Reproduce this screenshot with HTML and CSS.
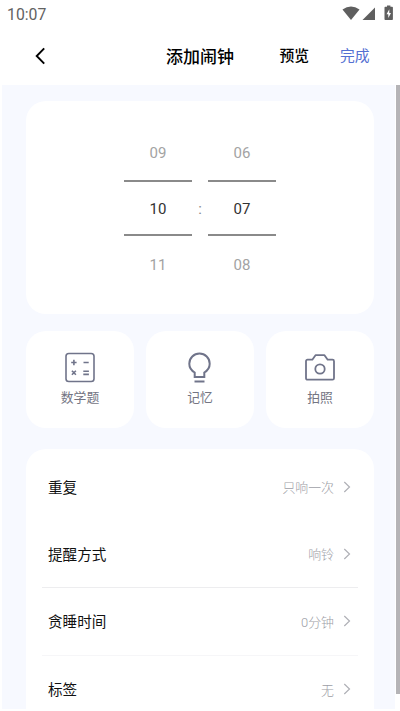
FILE: index.html
```html
<!DOCTYPE html>
<html lang="zh-CN">
<head>
<meta charset="utf-8">
<title>添加闹钟</title>
<link rel="stylesheet" href="styles.css">
</head>
<body>
<div class="screen">
  <div class="status">
    <span class="clock">10:07</span>
    <svg class="status-icons" width="52" height="18" viewBox="0 0 52 18">
      <path d="M0.5 4.6Q9 -1.6 17.5 4.6L9 15Z" fill="#5f5f5f"/>
      <path d="M33 2.5V15H20.5Z" fill="#5f5f5f"/>
      <path d="M43.300 1.800h1.700V0.500h3.400v1.300h1.700a.8.8 0 0 1 .8.8V14.200a.8.8 0 0 1-.8.8h-6.800a.8.8 0 0 1-.8-.8V2.600a.8.8 0 0 1 .8-.8Z" fill="#5f5f5f"/>
      <path d="M47.300 4.200 44.500 9.300h1.800v3.700L49 7.900h-1.700Z" fill="#fff"/>
    </svg>
  </div>
  <header class="bar">
    <svg class="back" width="12" height="18" viewBox="0 0 12 18"><path d="M9.200 1.300 1.700 9l7.500 7.700" fill="none" stroke="#000" stroke-width="1.900"/></svg>
    <h1 class="title">添加闹钟</h1>
    <span class="preview">预览</span>
    <span class="done">完成</span>
  </header>
  <div class="body">
    <main class="content">
      <section class="card picker">
        <div class="wheel"><span class="dim">09</span><span class="current">10</span><span class="dim">11</span></div>
        <span class="colon">:</span>
        <div class="wheel"><span class="dim">06</span><span class="current">07</span><span class="dim">08</span></div>
      </section>
      <section class="tiles">
        <div class="card tile">
          <svg width="32" height="32" viewBox="0 0 32 32" fill="none" stroke="#70748a" stroke-width="1.600">
            <rect x="2" y="1.500" width="28" height="28" rx="2.800"/>
            <path d="M7.200 10.500h5.400M9.900 7.800v5.400M19.500 10.500h5.200M7.900 18.800l4 4M11.900 18.800l-4 4M19.300 19.300h5.600M19.300 22.400h5.600"/>
          </svg>
          <span>数学题</span>
        </div>
        <div class="card tile">
          <svg width="32" height="32" viewBox="0 0 32 32" fill="none" stroke="#70748a" stroke-width="2">
            <path d="M10.700 25.100V20.500C7.300 18.500 5.300 15.400 5.300 11.700a10.200 10.200 0 0 1 20.400 0C25.700 15.400 23.700 18.500 20.300 20.500v4.600Z"/>
            <path d="M10.500 29.500h10"/>
          </svg>
          <span>记忆</span>
        </div>
        <div class="card tile">
          <svg width="32" height="32" viewBox="0 0 32 32" fill="none" stroke="#70748a" stroke-width="1.800" stroke-linejoin="round">
            <path d="M3.500 7.700H8.300L11.500 3.200H20.500L23.700 7.700H28.500a1.500 1.500 0 0 1 1.500 1.500V26.200a1.500 1.500 0 0 1-1.500 1.500h-25a1.500 1.500 0 0 1-1.500-1.500V9.200a1.500 1.500 0 0 1 1.500-1.500Z"/>
            <circle cx="16" cy="17" r="4.700"/>
          </svg>
          <span>拍照</span>
        </div>
      </section>
      <section class="card list">
        <div class="row"><span class="label">重复</span><span class="value">只响一次</span><svg width="8" height="12" viewBox="0 0 8 12"><path d="M1.300 1 6.500 6 1.300 11" fill="none" stroke="#afb0b6" stroke-width="1.200"/></svg></div>
        <div class="row ruled"><span class="label">提醒方式</span><span class="value">响铃</span><svg width="8" height="12" viewBox="0 0 8 12"><path d="M1.300 1 6.500 6 1.300 11" fill="none" stroke="#afb0b6" stroke-width="1.200"/></svg></div>
        <div class="row ruled faint"><span class="label">贪睡时间</span><span class="value">0分钟</span><svg width="8" height="12" viewBox="0 0 8 12"><path d="M1.300 1 6.500 6 1.300 11" fill="none" stroke="#afb0b6" stroke-width="1.200"/></svg></div>
        <div class="row"><span class="label">标签</span><span class="value">无</span><svg width="8" height="12" viewBox="0 0 8 12"><path d="M1.300 1 6.500 6 1.300 11" fill="none" stroke="#afb0b6" stroke-width="1.200"/></svg></div>
      </section>
    </main>
    <div class="scrollbar"></div>
  </div>
</div>
</body>
</html>
```

FILE: styles.css
```css
* { box-sizing: border-box; }
body {
  margin: 0;
  background: #fff;
  font-family: Roboto, "Noto Sans CJK SC", sans-serif;
}
.screen {
  width: 400px;
  height: 711px;
  overflow: hidden;
  display: flex;
  flex-direction: column;
}
.status {
  height: 28px;
  padding: 0 8px 0 7px;
  display: flex;
  justify-content: space-between;
  align-items: center;
}
.clock { padding-top: 1px; font-size: 15.800px; line-height: 28px; color: #626262; }
.status-icons { margin-right: -2px; }
.bar {
  height: 57px;
  display: grid;
  grid-template-columns: 166px 113px 61px 60px;
  align-items: center;
  position: relative;
  color: #000;
}
.back { position: absolute; left: 35px; top: 19px; }
.title {
  grid-column: 2;
  margin: 0;
  font-size: 17px;
  line-height: 24px;
  font-weight: 500;
}
.preview { padding-left: 0.500px; font-size: 14.800px; line-height: 22px; font-weight: 500; margin-top: -1px; }
.done { font-size: 14.800px; line-height: 22px; color: #5470d2; margin-top: -1px; }
.body {
  flex: 1;
  min-height: 0;
  display: flex;
  padding-left: 2px;
}
.content {
  width: 393px;
  height: 624px;
  padding: 16px 21px 0 24px;
  overflow: hidden;
  background: #f7f9ff;
}
.card { background: #fff; border-radius: 20px; }
.picker {
  height: 213px;
  display: flex;
  justify-content: center;
  align-items: center;
}
.wheel {
  width: 68px;
  height: 169px;
  display: grid;
  grid-template-rows: 57px 55px 57px;
  font-size: 15px;
  text-align: center;
  align-items: center;
}
.current {
  height: 56px;
  line-height: 54px;
  color: #333;
  border-top: 2px solid #8a8a8a;
  border-bottom: 2px solid #8a8a8a;
}
.dim { padding-top: 2px; color: #a3a3a3; line-height: 20px; }
.colon { width: 16px; padding-top: 2px; text-align: center; font-size: 15px; color: #888; }
.tiles {
  margin-top: 17px;
  display: grid;
  grid-template-columns: repeat(3, 108px);
  gap: 12px;
}
.tile {
  height: 97px;
  padding-top: 21px;
  display: flex;
  flex-direction: column;
  align-items: center;
  font-size: 12.800px;
  line-height: 18px;
  color: #747583;
}
.tile span { margin-top: 5px; }
.list {
  margin-top: 21px;
  height: 280px;
  padding: 4px 16px 0;
}
.row {
  height: 67.500px;
  padding: 0 7px 0 6px;
  display: flex;
  align-items: center;
}
.ruled { border-bottom: 1px solid #ededef; }
.faint { border-bottom-color: #f6f6f8; }
.label { flex: 1; margin-top: -1px; font-size: 14.600px; color: #111; }
.value { margin-right: 9px; font-size: 12.900px; font-weight: 300; color: #9c9da5; }
.scrollbar { margin-left: 1px; width: 4px; height: 609px; background: #b5b4b7; }
```
